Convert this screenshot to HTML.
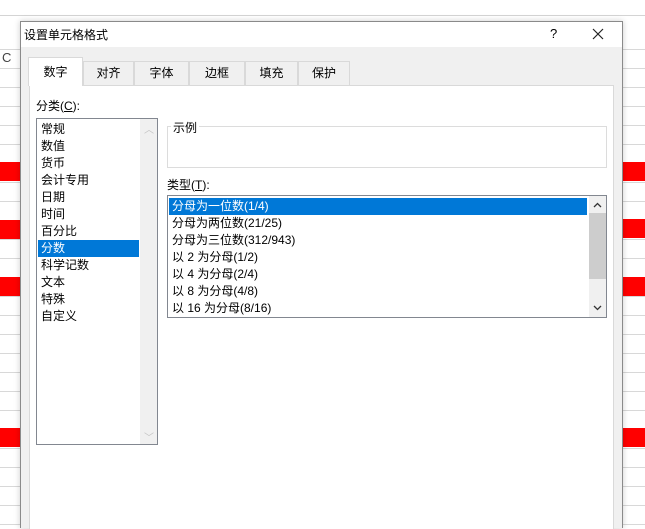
<!DOCTYPE html>
<html><head><meta charset="utf-8"><style>
*{margin:0;padding:0;box-sizing:border-box}
body{width:645px;height:528px;overflow:hidden;position:relative;background:#fff;font-family:"Liberation Sans","Noto Sans CJK SC",sans-serif;font-size:12px;color:#000}
.a{position:absolute}
.grid{background:repeating-linear-gradient(to bottom,#fff 0,#fff 18px,#d8d8d8 18px,#d8d8d8 19px);background-position:0 11px}
.red{background:#f00;height:19px}
.tab{position:absolute;top:60px;height:24px;background:#f0f0f0;border:1px solid #d9d9d9;border-bottom:none;text-align:center;line-height:22px;font-size:12px}
.it{position:absolute;left:4px;height:17px;line-height:17px;white-space:nowrap}
</style></head><body>
<div class="a grid" style="left:0;top:20px;width:21px;height:508px"></div>
<div class="a grid" style="left:622px;top:20px;width:23px;height:508px"></div>
<div class="a" style="left:0;top:15px;width:645px;height:1px;background:#d4d4d4"></div>
<div class="a" style="left:2px;top:50px;font-size:13px;color:#444">C</div>
<div class="a red" style="left:0;top:162px;width:21px"></div>
<div class="a red" style="left:0;top:220px;width:21px"></div>
<div class="a red" style="left:0;top:277px;width:21px"></div>
<div class="a red" style="left:0;top:428px;width:21px"></div>
<div class="a red" style="left:622px;top:162px;width:23px"></div>
<div class="a red" style="left:622px;top:219px;width:23px"></div>
<div class="a red" style="left:622px;top:277px;width:23px"></div>
<div class="a red" style="left:622px;top:428px;width:23px"></div>

<div class="a" style="left:20px;top:21px;width:603px;height:507px;background:#f0f0f0;border:1px solid #8a8a8a;border-bottom:none;box-shadow:0 0 6px rgba(0,0,0,.2)">
 <div class="a" style="left:0;top:0;width:601px;height:25px;background:#fff"></div>
 <div class="a" style="left:3px;top:4px;font-size:12px">设置单元格格式</div>
 <div class="a" style="left:529px;top:4px;font-size:13px">?</div>
 <svg class="a" style="left:571px;top:6px" width="12" height="12"><path d="M1 1L11 11M11 1L1 11" stroke="#222" stroke-width="1.2"/></svg>
 <div class="a" style="left:8px;top:63px;width:585px;height:444px;background:#fff;border:1px solid #d9d9d9;border-bottom:none"></div>
 <div class="tab" style="left:7px;top:35px;width:55px;height:29px;background:#fff;line-height:28px;z-index:2">数字</div>
 <div class="tab" style="left:62px;top:39px;width:51px">对齐</div>
 <div class="tab" style="left:113px;top:39px;width:55px">字体</div>
 <div class="tab" style="left:168px;top:39px;width:56px">边框</div>
 <div class="tab" style="left:224px;top:39px;width:53px">填充</div>
 <div class="tab" style="left:277px;top:39px;width:52px">保护</div>

 <div class="a" style="left:15px;top:75px">分类(<u>C</u>):</div>
 <div class="a" style="left:15px;top:96px;width:122px;height:327px;border:1px solid #828790;background:#fff">
  <div class="a" style="left:103px;top:0;width:17px;height:325px;background:#f0f0f0"></div>
  <div class="a" style="left:107px;top:2px;color:#c4c4c4;font-size:10px">︿</div>
  <div class="a" style="left:107px;top:310px;color:#c4c4c4;font-size:10px">﹀</div>
  <div class="it" style="top:2px">常规</div>
  <div class="it" style="top:19px">数值</div>
  <div class="it" style="top:36px">货币</div>
  <div class="it" style="top:53px">会计专用</div>
  <div class="it" style="top:70px">日期</div>
  <div class="it" style="top:87px">时间</div>
  <div class="it" style="top:104px">百分比</div>
  <div class="it" style="top:121px;left:1px;width:101px;padding-left:3px;background:#0078d7;color:#fff">分数</div>
  <div class="it" style="top:138px">科学记数</div>
  <div class="it" style="top:155px">文本</div>
  <div class="it" style="top:172px">特殊</div>
  <div class="it" style="top:189px">自定义</div>
 </div>

 <div class="a" style="left:146px;top:104px;width:440px;height:42px;border:1px solid #dcdcdc"></div>
 <div class="a" style="left:150px;top:97px;background:#fff;padding:0 2px">示例</div>
 <div class="a" style="left:146px;top:154px">类型(<u>T</u>):</div>
 <div class="a" style="left:146px;top:173px;width:440px;height:123px;border:1px solid #828790;background:#fff">
  <div class="a" style="left:421px;top:0;width:17px;height:121px;background:#f0f0f0"></div>
  <div class="a" style="left:421px;top:17px;width:17px;height:66px;background:#cdcdcd"></div>
  <svg class="a" style="left:425px;top:6px" width="9" height="6"><path d="M1 5L4.5 1.5L8 5" stroke="#333" fill="none" stroke-width="1.3"/></svg>
  <svg class="a" style="left:425px;top:109px" width="9" height="6"><path d="M1 1L4.5 4.5L8 1" stroke="#333" fill="none" stroke-width="1.3"/></svg>
  <div class="it" style="top:2px;left:1px;width:418px;padding-left:3px;background:#0078d7;color:#fff">分母为一位数(1/4)</div>
  <div class="it" style="top:19px">分母为两位数(21/25)</div>
  <div class="it" style="top:36px">分母为三位数(312/943)</div>
  <div class="it" style="top:53px">以 2 为分母(1/2)</div>
  <div class="it" style="top:70px">以 4 为分母(2/4)</div>
  <div class="it" style="top:87px">以 8 为分母(4/8)</div>
  <div class="it" style="top:104px">以 16 为分母(8/16)</div>
 </div>
</div>
</body></html>
